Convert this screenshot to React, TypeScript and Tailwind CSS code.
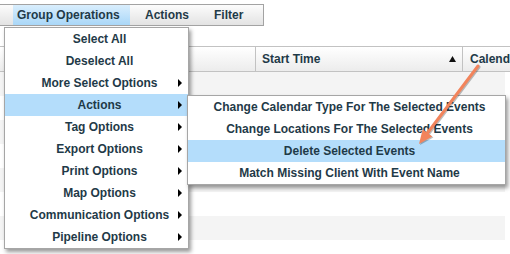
import React from 'react';

const MENU = [
  { label: 'Select All', sub: false },
  { label: 'Deselect All', sub: false },
  { label: 'More Select Options', sub: true },
  { label: 'Actions', sub: true, active: true },
  { label: 'Tag Options', sub: true },
  { label: 'Export Options', sub: true },
  { label: 'Print Options', sub: true },
  { label: 'Map Options', sub: true },
  { label: 'Communication Options', sub: true },
  { label: 'Pipeline Options', sub: true },
];

const SUB = [
  { label: 'Change Calendar Type For The Selected Events' },
  { label: 'Change Locations For The Selected Events' },
  { label: 'Delete Selected Events', active: true },
  { label: 'Match Missing Client With Event Name' },
];

function Caret() {
  return (
    <span className="absolute right-[6px] top-[7px] h-0 w-0 border-y-[4px] border-l-[4px]
                     border-y-transparent border-l-black" />
  );
}

export default function App() {
  return (
    <div className="relative h-[254px] w-[510px] overflow-hidden bg-white font-['Liberation_Sans',Arial,sans-serif]
                    text-[12px] font-bold text-[#1f3a48]">
      {/* Top bar */}
      <div className="mt-[4px] flex h-[22px] w-[264px] items-stretch border border-l-0 border-[#a3a3a3]
                      bg-gradient-to-b from-[#fcfcfc] to-[#e3e3e3]">
        <div className="ml-[13px] flex w-[117px] items-center bg-gradient-to-b from-[#d9eefd]
                        to-[#a9d7f8] pl-[4px]">
          Group Operations
        </div>
        <div className="flex items-center pl-[15px]">Actions</div>
        <div className="flex items-center pl-[25px]">Filter</div>
      </div>

      <div className="h-[20px]" />

      {/* Table header */}
      <div className="flex h-[26px] overflow-hidden border-y border-[#c2c2c2] bg-gradient-to-b from-[#ffffff] to-[#ececec]">
        <div className="w-[256px] shrink-0 border-r border-[#c2c2c2]" />
        <div className="relative flex w-[207px] shrink-0 items-center border-r border-[#c2c2c2] pl-[6px]">
          Start Time
          <svg className="absolute right-[6px] top-[9px]" width="7" height="6" viewBox="0 0 7 6">
            <polygon points="3.5,0 7,6 0,6" fill="#111" />
          </svg>
        </div>
        <div className="flex shrink-0 items-center whitespace-nowrap pl-[7px]">Calendar</div>
      </div>

      {/* Rows */}
      <div className="w-[505px]">
        {[0, 1, 2, 3, 4, 5, 6, 7].map((i) => (
          <div key={i} className={`h-[24px] ${i % 2 === 0 ? 'bg-[#f4f4f4]' : 'bg-white'}`} />
        ))}
      </div>

      {/* Main menu */}
      <div className="absolute left-[4px] top-[27px] w-[185px] border border-[#a6a6a6] bg-white
                      shadow-[2px_3px_4px_rgba(0,0,0,0.4)]">
        {MENU.map((m) => (
          <div key={m.label}
               className={`relative flex h-[22px] items-center justify-center pl-[6px] ${
                 m.active ? 'bg-[#b4ddfb]' : ''}`}>
            {m.label}
            {m.sub && <Caret />}
          </div>
        ))}
      </div>

      {/* Sub menu */}
      <div className="absolute left-[187px] top-[95px] w-[319px] border border-[#a6a6a6] bg-white
                      shadow-[2px_3px_4px_rgba(0,0,0,0.4)]">
        {SUB.map((s) => (
          <div key={s.label}
               className={`flex h-[22px] items-center justify-center pl-[6px] ${
                 s.active ? 'bg-[#b4ddfb]' : ''}`}>
            {s.label}
          </div>
        ))}
      </div>

      {/* Annotation arrow */}
      <svg className="pointer-events-none absolute left-0 top-0" width="510" height="254">
        <g transform="translate(1,1)" opacity="0.25">
          <line x1="478" y1="66" x2="427.5" y2="133" stroke="#000" strokeWidth="3" strokeLinecap="round" />
          <polygon points="419,144 432.3,136.5 422.7,129.3" fill="#000" />
        </g>
        <line x1="478" y1="66" x2="427.5" y2="133" stroke="#f2845c" strokeWidth="3" strokeLinecap="round" />
        <polygon points="419,144 432.3,136.5 422.7,129.3" fill="#f2845c" />
      </svg>
    </div>
  );
}
